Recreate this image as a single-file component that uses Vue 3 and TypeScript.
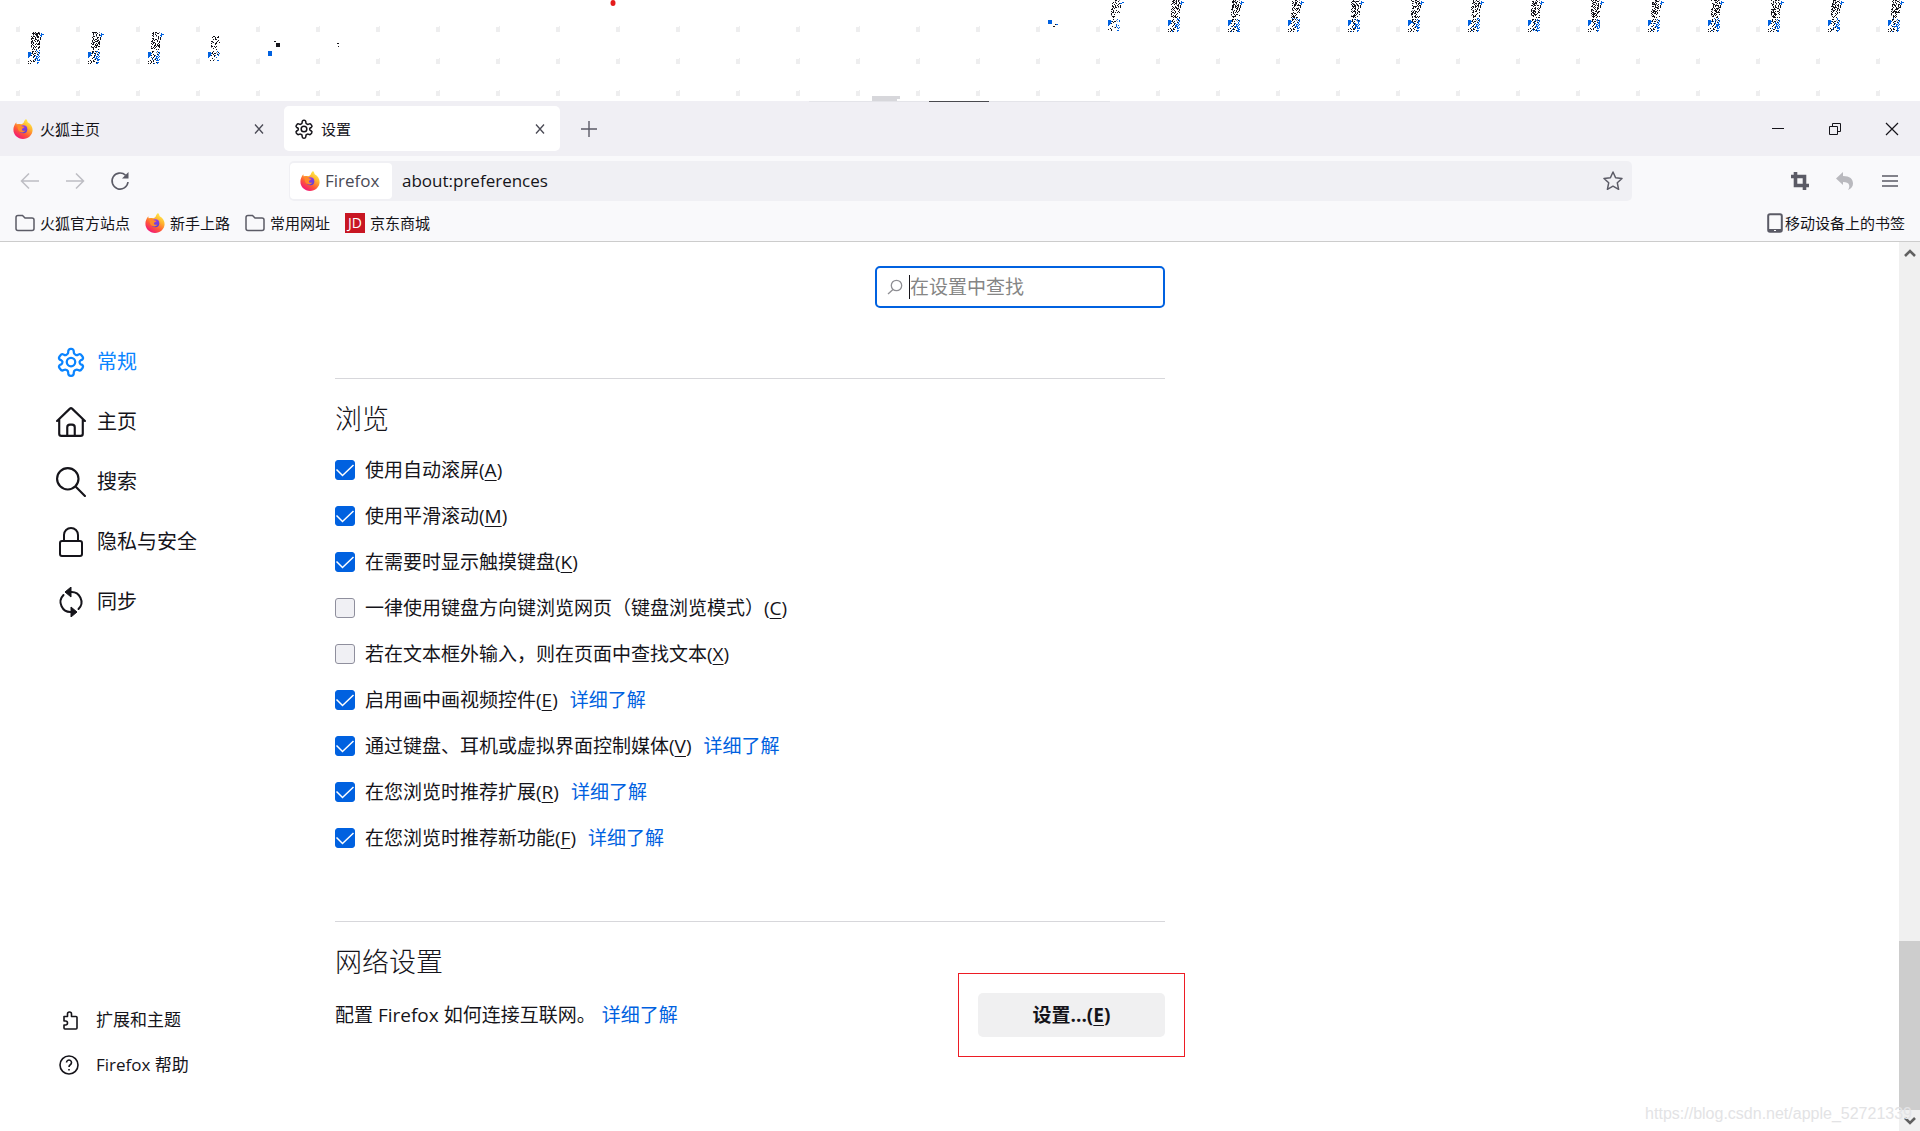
<script setup lang="ts">
import { ref } from 'vue'

interface Option {
  id: string
  text: string
  key: string
  on: boolean
  more?: boolean
}

const options = ref<Option[]>([
  { id: 'autoscroll', text: '使用自动滚屏', key: 'A', on: true },
  { id: 'smooth', text: '使用平滑滚动', key: 'M', on: true },
  { id: 'touch', text: '在需要时显示触摸键盘', key: 'K', on: true },
  { id: 'caret', text: '一律使用键盘方向键浏览网页（键盘浏览模式）', key: 'C', on: false },
  { id: 'find', text: '若在文本框外输入，则在页面中查找文本', key: 'X', on: false },
  { id: 'pip', text: '启用画中画视频控件', key: 'E', on: true, more: true },
  { id: 'media', text: '通过键盘、耳机或虚拟界面控制媒体', key: 'V', on: true, more: true },
  { id: 'ext', text: '在您浏览时推荐扩展', key: 'R', on: true, more: true },
  { id: 'feature', text: '在您浏览时推荐新功能', key: 'F', on: true, more: true }
])

const categories = [
  { icon: 'gear', text: '常规' },
  { icon: 'home', text: '主页' },
  { icon: 'search', text: '搜索' },
  { icon: 'lock', text: '隐私与安全' },
  { icon: 'sync', text: '同步' }
]

const bookmarks = [
  { icon: 'folder', text: '火狐官方站点' },
  { icon: 'fox', text: '新手上路' },
  { icon: 'folder', text: '常用网址' },
  { icon: 'jd', text: '京东商城' }
]

const url = ref('about:preferences')
const query = ref('')

// One speckle, a pixel per character: # black, g grey, b blue, l light blue
const speckle = [
  '     # ##  g    ',
  '    ## g ##  b  ',
  '     # ##  # bbb',
  '    #g  #  #bb  ',
  '     ## g #  b  ',
  '    #  # ## #   ',
  '    ## #  # #   ',
  '     # ## g #   ',
  '    # #  ##     ',
  '   ##  # # #    ',
  '    g## #  #    ',
  '   # # ## #     ',
  '    ## # # #    ',
  '   #  ## #      ',
  '   ## # #       ',
  '   g # #        ',
  '    ###         ',
  '     #  #       ',
  '                ',
  '    ## # b      ',
  'bbb #   g #b    ',
  'bbbb# ## l b    ',
  'bbb  #   #b     ',
  'bbb#  #b  b     ',
  'bb    # bb b    ',
  'b    #  b b     ',
  '    #  bbb      ',
  '      g# b b    ',
  '  #  #   bb     ',
  '#  # ##         ',
  '   #    #bb     ',
  '# #  #   b      '
]
const sparse = [
  { tile: 3, from: 4, to: 28 },
  { tile: 18, from: 0, to: 30 }
]

function noise(index: number, x: number, y: number): number {
  let h = Math.imul(index + 1, 374761393) + Math.imul(x + 1, 668265263) + Math.imul(y + 1, 1274126177)
  h = Math.imul(h ^ (h >>> 13), 1103515245)
  h = Math.imul(h ^ (h >>> 15), 2246822519)
  return ((h ^ (h >>> 16)) >>> 0) % 100
}

function pixels(index: number, mark: string): string {
  const limit = sparse.find(s => s.tile === index)
  let d = ''
  speckle.forEach((row, y) => {
    for (let x = 0; x < row.length; x++) {
      const n = noise(index, x, y)
      if (limit && (y < limit.from || y > limit.to || (x > 3 && n < 45))) continue
      let c = row[x]
      if (!limit && x > 2 && x < 12 && y < 18) {
        if (c === ' ' && n < 14) c = '#'
        else if (c === '#' && n > 72) c = ' '
      } else if (!limit && x > 2 && x < 12) {
        if (c === ' ' && n < 8) c = 'b'
        else if (c === '#' && n > 80) c = ' '
      }
      if (c === mark) d += `M${x} ${y}h1v1h-1z`
    }
  })
  return d
}

const marks = [
  { mark: '#', color: '#15141a' },
  { mark: 'g', color: '#8f8f9d' },
  { mark: 'b', color: '#0061e0' },
  { mark: 'l', color: '#8ab8f4' }
]
const tiles = [
  ...[0, 1, 2, 3].map(i => ({ i, x: i * 60 + 28, y: 32 })),
  ...Array.from({ length: 14 }, (_, n) => ({ i: n + 18, x: (n + 18) * 60 + 28, y: 0 }))
].map(t => ({ ...t, layers: marks.map(m => ({ color: m.color, d: pixels(t.i, m.mark) })) }))
</script>

<template>
  <div class="page">
    <svg class="symbols" aria-hidden="true">
      <defs>
        <linearGradient id="flame" x1="0.85" y1="0.05" x2="0.25" y2="1">
          <stop offset="0" stop-color="#fff44f" />
          <stop offset="0.35" stop-color="#ffb02e" />
          <stop offset="0.65" stop-color="#ff5a36" />
          <stop offset="1" stop-color="#f0107f" />
        </linearGradient>
        <linearGradient id="globe" x1="0.2" y1="0" x2="0.6" y2="1">
          <stop offset="0" stop-color="#a33bea" />
          <stop offset="1" stop-color="#5b3fd6" />
        </linearGradient>
        <symbol id="fox" viewBox="0 0 20 20">
          <path fill="url(#flame)" d="M13 0c1 1 1.400 2.200 1.700 3.200C18 5 19.700 8 19.600 11.200 19.400 16 15.300 19.900 10 19.900S.400 16 .400 10.800C.400 8 1.400 5.600 3.300 3.200c0 1 .2 1.700.6 2.300C5 4.900 6.600 4.800 8 5.200 9.500 4.800 10.300 4.200 10.800 3.200 11.300 2 11.800.800 13 0z" />
          <circle cx="10.300" cy="10.300" r="4" fill="url(#globe)" />
          <path fill="#ff8a2a" d="M3.800 5.600C6 4.700 8 5.600 9 7.300l2.400.8c0 1-2.200 1.200-2.500 2.200 0 1.500 2 2.100 3.600 1-1.200 3-6.700 3-7.600-1.200-.3-1.600-.2-3-1.100-4.500z" />
        </symbol>
        <symbol id="gear" viewBox="0 0 24 24">
          <g fill="none" stroke="currentColor" stroke-width="1.800">
            <path d="M12.220 1.500h-.44a2 2 0 0 0-2 2v.68a2 2 0 0 1-1 1.730l-.43.25a2 2 0 0 1-2 0l-.15-.08a2 2 0 0 0-2.730.73l-.72.88a2 2 0 0 0 .73 2.730l.65.1a2 2 0 0 1 1 1.220v.51a2 2 0 0 1-1 1.740l-.65.09a2 2 0 0 0-.73 2.730l.72.880a2 2 0 0 0 2.730.73l.15-.08a2 2 0 0 1 2 0l.43.25a2 2 0 0 1 1 1.730v.68a2 2 0 0 0 2 2h.44a2 2 0 0 0 2-2v-.68a2 2 0 0 1 1-1.730l.43-.25a2 2 0 0 1 2 0l.15.08a2 2 0 0 0 2.730-.73l.72-.890a2 2 0 0 0-.73-2.730l-.65-.08a2 2 0 0 1-1-1.740v-.5a2 2 0 0 1 1-1.240l.65-.09a2 2 0 0 0 .73-2.730l-.72-.88a2 2 0 0 0-2.730-.73l-.15.08a2 2 0 0 1-2 0l-.43-.25a2 2 0 0 1-1-1.730V3.500a2 2 0 0 0-2-2z" />
            <circle cx="12" cy="12" r="3.400" />
          </g>
        </symbol>
        <symbol id="home" viewBox="0 0 28 28">
          <path d="M1 13 13 1.500q1-.9 2 0L27 13M3 11.500V25q0 2 2 2h18q2 0 2-2V11.500M10.500 27V19q0-2.500 2.500-2.500h2q2.500 0 2.500 2.500v8" fill="none" stroke="currentColor" stroke-width="2" stroke-linecap="round" stroke-linejoin="round" />
        </symbol>
        <symbol id="search" viewBox="0 0 28 28">
          <path d="M21 11a10 10 0 1 1-20 0 10 10 0 0 1 20 0zM18 18l9 9" fill="none" stroke="currentColor" stroke-width="2" stroke-linecap="round" />
        </symbol>
        <symbol id="lock" viewBox="0 0 28 30">
          <path d="M5 14h18q2 0 2 2v11q0 2-2 2H5q-2 0-2-2V16q0-2 2-2zM7 14V8a7 7 0 0 1 14 0v6" fill="none" stroke="currentColor" stroke-width="2" />
        </symbol>
        <symbol id="sync" viewBox="0 0 28 30">
          <path d="M6.500 8A10 10 0 0 0 14.500 25M21.500 22A10 10 0 0 0 13.500 5" fill="none" stroke="currentColor" stroke-width="2" stroke-linecap="round" />
          <path d="M14 0v10L8 5zM14 20v10l6-5z" fill="currentColor" stroke="currentColor" stroke-linejoin="round" />
        </symbol>
        <symbol id="folder" viewBox="0 0 20 20">
          <path d="M3 2.500h4.500L10 5h7q2 0 2 2v8.500q0 2-2 2H3q-2 0-2-2v-11q0-2 2-2z" fill="none" stroke="#5b5b66" stroke-width="1.500" />
        </symbol>
        <symbol id="puzzle" viewBox="0 0 20 20">
          <path d="M5 6.500h3.500V4a2 2 0 0 1 4 0v2.500H17q1 0 1 1V18q0 1-1 1H6q-1 0-1-1v-3h1.500a2 2 0 0 0 0-4H5z" fill="none" stroke="currentColor" stroke-width="1.600" stroke-linejoin="round" />
        </symbol>
        <symbol id="help" viewBox="0 0 20 20">
          <path d="M19 10a9 9 0 1 1-18 0 9 9 0 0 1 18 0zM7.500 7.500a2.500 2.500 0 1 1 3.800 2.200q-1.300.8-1.300 2.300M10 14v1.500" fill="none" stroke="currentColor" stroke-width="1.600" />
        </symbol>
        <symbol id="cross" viewBox="0 0 12 12">
          <path d="m2 1.500 8 9M10 1.500l-8 9" fill="none" stroke="currentColor" stroke-width="1.300" />
        </symbol>
      </defs>
    </svg>

    <div class="residue">
      <svg class="grid" aria-hidden="true">
        <defs>
          <pattern id="ticks" width="60" height="32" patternUnits="userSpaceOnUse">
            <path d="M16 27h3v-1h1v6h-4z" fill="#eeeeef" />
          </pattern>
        </defs>
        <rect width="100%" height="96" fill="url(#ticks)" />
        <g v-for="t in tiles" :key="t.i" :transform="`translate(${t.x} ${t.y})`" shape-rendering="crispEdges">
          <path v-for="l in t.layers" :key="l.color" :d="l.d" :fill="l.color" />
        </g>
        <g shape-rendering="crispEdges">
          <path d="M268 51h4v5h-4zM1048 20h4v4h-4zM1056 24h2v1h-2z" fill="#0061e0" />
          <path d="M274 41h2v1h-2zM276 43h4v4h-4zM337 43h2v1h-2zM338 46h1v1h-1zM1053 26h2v1h-2zM1055 24h1v1h-1z" fill="#15141a" />
        </g>
        <ellipse cx="613" cy="3" rx="2.500" ry="3" fill="#e41b1b" />
        <path d="M872 96h28v3h-3v2h-25z" fill="#d7d7db" />
      </svg>
    </div>

    <header class="chrome">
      <div class="tabs">
        <div class="tab">
          <svg class="i20"><use href="#fox" /></svg>
          <span class="grow">火狐主页</span>
          <button class="close" aria-label="关闭"><svg class="i12"><use href="#cross" /></svg></button>
        </div>
        <div class="tab active">
          <svg class="i20"><use href="#gear" /></svg>
          <span class="grow">设置</span>
          <button class="close" aria-label="关闭"><svg class="i12"><use href="#cross" /></svg></button>
        </div>
        <button class="new" aria-label="新标签页">
          <svg class="i16" viewBox="0 0 16 16"><path d="M8 0v16M0 8h16" stroke="#5b5b66" stroke-width="1.400" /></svg>
        </button>
        <div class="window">
          <button aria-label="最小化"><svg class="i14" viewBox="0 0 14 14"><path d="M1 6.500h12" stroke="#15141a" /></svg></button>
          <button aria-label="还原"><svg class="i14" viewBox="0 0 14 14"><path d="M1.500 4.500h8v8h-8zM4.500 4V1.500h8v8H10" fill="none" stroke="#15141a" /></svg></button>
          <button aria-label="关闭窗口"><svg class="i14" viewBox="0 0 14 14"><path d="m1 1 12 12M13 1 1 13" stroke="#15141a" stroke-width="1.200" /></svg></button>
        </div>
      </div>

      <div class="toolbar">
        <div class="history">
          <button aria-label="后退"><svg class="i20" viewBox="0 0 20 20"><path d="M19 10H2M9 2.500 1.500 10 9 17.500" fill="none" stroke="#bdbdc3" stroke-width="1.500" /></svg></button>
          <button aria-label="前进"><svg class="i20" viewBox="0 0 20 20"><path d="M1 10h17M11 2.500l7.500 7.500-7.500 7.500" fill="none" stroke="#bdbdc3" stroke-width="1.500" /></svg></button>
          <button aria-label="刷新">
            <svg class="i20" viewBox="0 0 20 20"><path d="M15.500 4.200A8 8 0 1 0 18 11" fill="none" stroke="#5b5b66" stroke-width="1.600" /><path d="M18.500 1v6.500H12z" fill="#5b5b66" /></svg>
          </button>
        </div>
        <div class="address">
          <span class="identity"><svg class="i20"><use href="#fox" /></svg>Firefox</span>
          <input v-model="url" class="url" type="text" aria-label="地址" />
          <button aria-label="添加书签">
            <svg class="i20" viewBox="0 0 20 20"><path d="m10 1 2.600 5.700 6.400.8-4.700 4.300 1.300 6.500L10 15.200l-5.600 3.100 1.300-6.500L1 7.500l6.400-.8z" fill="none" stroke="#5b5b66" stroke-width="1.500" stroke-linejoin="round" /></svg>
          </button>
        </div>
        <div class="tools">
          <button aria-label="截图"><svg class="i20" viewBox="0 0 20 20"><path d="M5.500 1v13.500H19M1 5.500h13.500V19" fill="none" stroke="#5b5b66" stroke-width="3.600" /></svg></button>
          <button aria-label="撤销"><svg class="i20" viewBox="0 0 20 20"><path d="M1 7.500 8 1v4c7 0 10 3 10 7.500 0 3-1.500 5-5 6.500 2.500-3.500 2-8-5-8V14z" fill="#b9b9be" /></svg></button>
          <button aria-label="菜单"><svg class="i16" viewBox="0 0 16 16"><path d="M0 3h16M0 8h16M0 13h16" stroke="#5b5b66" stroke-width="1.400" /></svg></button>
        </div>
      </div>

      <nav class="bookmarks">
        <a v-for="b in bookmarks" :key="b.text" href="#">
          <span v-if="b.icon === 'jd'" class="jd">JD</span>
          <svg v-else class="i20"><use :href="'#' + b.icon" /></svg>
          {{ b.text }}
        </a>
        <a href="#" class="mobile">
          <svg class="device" viewBox="0 0 16 20"><path d="M3 1.200h10q1.800 0 1.800 1.800v14q0 1.800-1.800 1.800H3q-1.800 0-1.800-1.800V3q0-1.800 1.800-1.800z" fill="none" stroke="#5b5b66" stroke-width="2" /><path d="M1 16h14v2.500H1z" fill="#5b5b66" /><path d="M7 17.500h2" stroke="#fff" /></svg>
          移动设备上的书签
        </a>
      </nav>
    </header>

    <div class="body">
      <aside>
        <nav class="categories">
          <a v-for="(c, n) in categories" :key="c.icon" href="#" :class="{ current: n === 0 }">
            <svg><use :href="'#' + c.icon" /></svg>{{ c.text }}
          </a>
        </nav>
        <nav class="support">
          <a href="#"><svg class="i20"><use href="#puzzle" /></svg>扩展和主题</a>
          <a href="#"><svg class="i20"><use href="#help" /></svg>Firefox 帮助</a>
        </nav>
      </aside>

      <main>
        <label class="find">
          <svg class="i16" viewBox="0 0 16 16"><circle cx="9.500" cy="6.500" r="5.200" fill="none" stroke="#8f8f94" stroke-width="1.300" /><path d="m6 10.500-5 4.500" stroke="#8f8f94" stroke-width="1.300" /></svg>
          <span class="cursor"></span>
          <input v-model="query" type="text" placeholder="在设置中查找" aria-label="在设置中查找" />
        </label>

        <section class="browsing">
          <h2>浏览</h2>
          <ul>
            <li v-for="o in options" :key="o.id">
              <span class="box">
                <input :id="o.id" v-model="o.on" type="checkbox" />
                <svg v-if="o.on" class="i20" viewBox="0 0 20 20"><path d="m1.500 9.500 6 6L18.500 5" fill="none" stroke="#fff" stroke-width="1.500" /></svg>
              </span>
              <label :for="o.id">{{ o.text }}(<u>{{ o.key }}</u>)</label>
              <a v-if="o.more" href="#">详细了解</a>
            </li>
          </ul>
        </section>

        <section class="network">
          <h2>网络设置</h2>
          <div class="row">
            <p>配置 Firefox 如何连接互联网。<a href="#">详细了解</a></p>
            <div class="highlight"><button>设置...(<u>E</u>)</button></div>
          </div>
        </section>
      </main>

      <div class="scroll">
        <button aria-label="向上滚动"><svg class="i12" viewBox="0 0 12 12"><path d="m1 9 5-5 5 5" fill="none" stroke="#606060" stroke-width="2.600" /></svg></button>
        <span class="space"></span>
        <span class="thumb"></span>
        <button aria-label="向下滚动"><svg class="i12" viewBox="0 0 12 12"><path d="m1 3 5 5 5-5" fill="none" stroke="#606060" stroke-width="2.600" /></svg></button>
      </div>
      <span class="watermark">https://blog.csdn.net/apple_52721339</span>
    </div>
  </div>
</template>

<style>
body {
  margin: 0;
}
</style>

<style scoped>
.page {
  display: flex;
  flex-direction: column;
  min-height: 100vh;
  background: #fff;
  color: #15141a;
  font: 15px/20px "Open Sans", "Noto Sans CJK SC", sans-serif;
}
.page * {
  box-sizing: border-box;
}
.symbols {
  position: absolute;
  width: 0;
  height: 0;
}
svg {
  display: block;
  flex: none;
}
button {
  display: flex;
  align-items: center;
  justify-content: center;
  padding: 0;
  border: 0;
  background: none;
  color: inherit;
  font: inherit;
}
input {
  min-width: 0;
  margin: 0;
  padding: 0;
  border: 0;
  outline: 0;
  background: none;
  color: inherit;
  font: inherit;
}
a {
  color: inherit;
  text-decoration: none;
}
u {
  text-underline-offset: 3px;
  text-decoration-thickness: 1px;
}
.i20 { width: 20px; height: 20px; }
.i16 { width: 16px; height: 16px; }
.i14 { width: 14px; height: 14px; }
.i12 { width: 12px; height: 12px; }

.residue {
  height: 101px;
}
.grid {
  width: 100%;
  height: 101px;
}

.chrome {
  border-bottom: 1px solid #cccccc;
  background: #f9f9fb;
}
.tabs {
  display: flex;
  align-items: center;
  height: 55px;
  background: linear-gradient(90deg, #e4e4e9 120px, #4a4a4f 120px 180px, #e4e4e9 180px) 809px 0 / 301px 1px no-repeat, #f0eff4;
}
.tab {
  display: flex;
  align-items: center;
  gap: 7px;
  width: 276px;
  height: 45px;
  padding: 0 11px 0 13px;
  border-radius: 5px;
}
.tab.active {
  margin-left: 8px;
  padding: 0 14px 0 10px;
  background: #fff;
}
.grow {
  flex: 1;
}
.close {
  color: #4a4a55;
}
.new {
  margin-left: 21px;
}
.window {
  display: flex;
  margin-left: auto;
}
.window button {
  width: 57px;
  height: 55px;
}
.toolbar {
  display: flex;
  align-items: center;
  height: 50px;
  padding: 0 8px 0 20px;
}
.history {
  display: flex;
  flex: none;
  gap: 25px;
  width: 269px;
}
.address {
  display: flex;
  align-items: center;
  width: 71%;
  height: 40px;
  padding: 2px 9px 2px 1px;
  border-radius: 5px;
  background: #f0f0f4;
  font-size: 17px;
}
.identity {
  display: flex;
  align-items: center;
  gap: 5px;
  width: 102px;
  height: 36px;
  padding-left: 10px;
  border-radius: 4px;
  background: #fff;
  color: #4a4a55;
}
.url {
  flex: 1;
  padding-left: 10px;
}
.tools {
  display: flex;
  margin-left: auto;
}
.tools button {
  width: 45px;
  height: 40px;
}
.bookmarks {
  display: flex;
  align-items: center;
  gap: 15px;
  height: 35px;
  padding: 0 15px 1px;
}
.bookmarks a {
  display: flex;
  align-items: center;
  gap: 5px;
}
.bookmarks .mobile {
  gap: 2px;
  margin-left: auto;
}
.device {
  width: 16px;
  height: 20px;
}
.jd {
  width: 20px;
  height: 20px;
  background: #c81623;
  color: #fff;
  font: 14px/20px "Open Sans", sans-serif;
  text-align: center;
}

.body {
  position: relative;
  display: flex;
  flex: 1;
}
aside {
  display: flex;
  flex-direction: column;
  justify-content: space-between;
  width: 335px;
  padding: 90px 0 44px;
}
aside a {
  display: flex;
  align-items: center;
}
.categories a {
  gap: 11px;
  height: 60px;
  padding-left: 56px;
  font-size: 20px;
}
.categories svg {
  width: 30px;
  height: 30px;
}
.categories .current {
  color: #0a84ff;
}
.support a {
  gap: 17px;
  height: 45px;
  padding-left: 59px;
  font-size: 17px;
}
main {
  display: flex;
  flex: 0 1 830px;
  flex-direction: column;
  padding-top: 24px;
  font-size: 19px;
  line-height: 26px;
}
.find {
  display: flex;
  align-items: center;
  align-self: flex-end;
  width: 290px;
  height: 42px;
  padding: 0 10px;
  border: 2px solid #0061e0;
  border-radius: 5px;
}
.cursor {
  width: 1px;
  height: 24px;
  margin-left: 6px;
  background: #15141a;
}
.find input {
  flex: 1;
}
.find input::placeholder {
  color: #858585;
  opacity: 1;
}
section {
  border-top: 1px solid #d7d7db;
}
.browsing {
  margin-top: 70px;
}
h2 {
  margin: 0;
  padding-top: 20px;
  font-size: 27px;
  font-weight: 300;
  line-height: 40px;
}
ul {
  margin: 0;
  padding: 8px 0 60px;
  list-style: none;
}
li {
  display: flex;
  align-items: center;
  height: 46px;
}
.box {
  display: grid;
  margin-right: 10px;
}
.box > * {
  grid-area: 1 / 1;
}
.box svg {
  pointer-events: none;
}
.box input {
  width: 20px;
  height: 20px;
  border: 1px solid #8f8f9d;
  border-radius: 3px;
  appearance: none;
  background: #f0f0f4;
}
.box input:checked {
  border-color: #0061e0;
  background: #0061e0;
}
main a {
  margin-left: 12px;
  color: #0061e0;
}
.row {
  display: flex;
  align-items: center;
  justify-content: space-between;
  margin: -9px -20px 0 0;
}
.row p {
  margin: 0;
}
.row a {
  margin-left: 6px;
}
.highlight {
  padding: 19px;
  border: 1px solid #ed1c24;
}
.highlight button {
  width: 187px;
  height: 44px;
  border-radius: 5px;
  background: #f0f0f1;
  font-weight: 700;
}
.scroll {
  display: flex;
  flex-direction: column;
  width: 21px;
  margin-left: auto;
  background: #f0f0f0;
}
.scroll button {
  height: 21px;
}
.space {
  flex: 4;
}
.thumb {
  flex: 1;
  background: #cdcdcd;
}
.watermark {
  position: absolute;
  right: 8px;
  bottom: 7px;
  color: #e3e3e5;
  font: 16px/20px "Liberation Sans", sans-serif;
}
</style>
